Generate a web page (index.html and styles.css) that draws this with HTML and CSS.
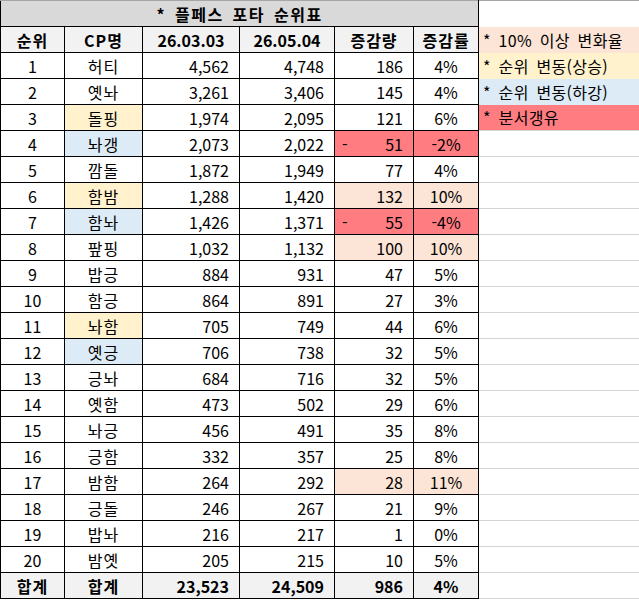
FILE: index.html
```html
<!DOCTYPE html>
<html lang="ko">
<head>
<meta charset="utf-8">
<title>플페스 포타 순위표</title>
<link rel="stylesheet" href="styles.css">
</head>
<body>
<table class="sheet">
  <colgroup>
    <col class="c-rank"><col class="c-name"><col class="c-d1"><col class="c-d2"><col class="c-delta"><col class="c-rate"><col class="c-legend">
  </colgroup>
  <tr class="title-row">
    <th colspan="6" class="title">* 플페스 포타 순위표</th>
    <td class="legend top"></td>
  </tr>
  <tr class="head-row">
    <th class="kr">순위</th><th class="kr">CP명</th><th>26.03.03</th><th>26.05.04</th><th class="kr">증감량</th><th class="kr">증감률</th>
    <td class="legend peach">* 10% 이상 변화율</td>
  </tr>
  <tr><td class="ctr">1</td><td class="ctr kr">허티</td><td class="num">4,562</td><td class="num">4,748</td><td class="num">186</td><td class="ctr">4%</td><td class="legend yellow">* 순위 변동(상승)</td></tr>
  <tr><td class="ctr">2</td><td class="ctr kr">옛놔</td><td class="num">3,261</td><td class="num">3,406</td><td class="num">145</td><td class="ctr">4%</td><td class="legend blue">* 순위 변동(하강)</td></tr>
  <tr><td class="ctr">3</td><td class="ctr kr yellow">돌핑</td><td class="num">1,974</td><td class="num">2,095</td><td class="num">121</td><td class="ctr">6%</td><td class="legend red">* 분서갱유</td></tr>
  <tr><td class="ctr">4</td><td class="ctr kr blue">놔갱</td><td class="num">2,073</td><td class="num">2,022</td><td class="num red"><span class="minus">-</span>51</td><td class="ctr red">-2%</td><td class="legend"></td></tr>
  <tr><td class="ctr">5</td><td class="ctr kr">깜돌</td><td class="num">1,872</td><td class="num">1,949</td><td class="num">77</td><td class="ctr">4%</td><td class="legend"></td></tr>
  <tr><td class="ctr">6</td><td class="ctr kr yellow">함밤</td><td class="num">1,288</td><td class="num">1,420</td><td class="num peach">132</td><td class="ctr peach">10%</td><td class="legend"></td></tr>
  <tr><td class="ctr">7</td><td class="ctr kr blue">함놔</td><td class="num">1,426</td><td class="num">1,371</td><td class="num red"><span class="minus">-</span>55</td><td class="ctr red">-4%</td><td class="legend"></td></tr>
  <tr><td class="ctr">8</td><td class="ctr kr">팦핑</td><td class="num">1,032</td><td class="num">1,132</td><td class="num peach">100</td><td class="ctr peach">10%</td><td class="legend"></td></tr>
  <tr><td class="ctr">9</td><td class="ctr kr">밥긍</td><td class="num">884</td><td class="num">931</td><td class="num">47</td><td class="ctr">5%</td><td class="legend"></td></tr>
  <tr><td class="ctr">10</td><td class="ctr kr">함긍</td><td class="num">864</td><td class="num">891</td><td class="num">27</td><td class="ctr">3%</td><td class="legend"></td></tr>
  <tr><td class="ctr">11</td><td class="ctr kr yellow">놔함</td><td class="num">705</td><td class="num">749</td><td class="num">44</td><td class="ctr">6%</td><td class="legend"></td></tr>
  <tr><td class="ctr">12</td><td class="ctr kr blue">옛긍</td><td class="num">706</td><td class="num">738</td><td class="num">32</td><td class="ctr">5%</td><td class="legend"></td></tr>
  <tr><td class="ctr">13</td><td class="ctr kr">긍놔</td><td class="num">684</td><td class="num">716</td><td class="num">32</td><td class="ctr">5%</td><td class="legend"></td></tr>
  <tr><td class="ctr">14</td><td class="ctr kr">옛함</td><td class="num">473</td><td class="num">502</td><td class="num">29</td><td class="ctr">6%</td><td class="legend"></td></tr>
  <tr><td class="ctr">15</td><td class="ctr kr">놔긍</td><td class="num">456</td><td class="num">491</td><td class="num">35</td><td class="ctr">8%</td><td class="legend"></td></tr>
  <tr><td class="ctr">16</td><td class="ctr kr">긍함</td><td class="num">332</td><td class="num">357</td><td class="num">25</td><td class="ctr">8%</td><td class="legend"></td></tr>
  <tr><td class="ctr">17</td><td class="ctr kr">밤함</td><td class="num">264</td><td class="num">292</td><td class="num peach">28</td><td class="ctr peach">11%</td><td class="legend"></td></tr>
  <tr><td class="ctr">18</td><td class="ctr kr">긍돌</td><td class="num">246</td><td class="num">267</td><td class="num">21</td><td class="ctr">9%</td><td class="legend"></td></tr>
  <tr><td class="ctr">19</td><td class="ctr kr">밥놔</td><td class="num">216</td><td class="num">217</td><td class="num">1</td><td class="ctr">0%</td><td class="legend"></td></tr>
  <tr><td class="ctr">20</td><td class="ctr kr">밤옛</td><td class="num">205</td><td class="num">215</td><td class="num">10</td><td class="ctr">5%</td><td class="legend"></td></tr>
  <tr class="total-row"><th class="kr">합계</th><th class="kr">합계</th><th class="num">23,523</th><th class="num">24,509</th><th class="num">986</th><th>4%</th><td class="legend"></td></tr>
</table>
</body>
</html>
```
FILE: styles.css
```css
html, body {
  margin: 0;
  padding: 0;
  background: #ffffff;
}

body {
  font-family: "Noto Sans CJK KR", "Noto Sans", sans-serif;
  font-size: 16px;
  color: #000000;
}

.sheet {
  border-collapse: collapse;
  table-layout: fixed;
  width: 639px;
  border-top: 1px solid #a6a6a6;
}

.c-rank { width: 64px; }
.c-name { width: 78px; }
.c-d1 { width: 97px; }
.c-d2 { width: 95px; }
.c-delta { width: 79px; }
.c-rate { width: 65px; }
.c-legend { width: 161px; }

.sheet tr {
  height: 26px;
}

.sheet th,
.sheet td {
  border: 1px solid #000000;
  padding: 0;
  height: 25px;
  line-height: 24px;
  vertical-align: middle;
  white-space: nowrap;
  overflow: hidden;
}

.sheet th {
  font-weight: 700;
  text-align: center;
}

.title-row .title {
  background: #d9d9d9;
  border-top: 1px solid #a6a6a6;
  letter-spacing: 1.5px;
  word-spacing: 3px;
}

.head-row th,
.total-row th {
  background: #f2f2f2;
}

.kr {
  letter-spacing: 1px;
}

.ctr {
  text-align: center;
}

.sheet .num {
  text-align: right;
  padding-right: 10px;
}

.minus {
  float: left;
  padding-left: 7px;
}

.sheet .legend {
  border: none;
  border-bottom: 1px solid #d4d4d4;
  text-align: left;
  padding-left: 4px;
  letter-spacing: 0.3px;
  word-spacing: 3px;
}

.sheet .legend.top {
  border-top: 1px solid #a6a6a6;
  border-bottom: none;
}

.sheet .legend.peach,
.sheet .legend.yellow,
.sheet .legend.blue {
  border-bottom: none;
}

.peach { background: #fce4d6; }
.yellow { background: #fff2cc; }
.blue { background: #ddebf7; }
.red { background: #ff7c80; }
```
